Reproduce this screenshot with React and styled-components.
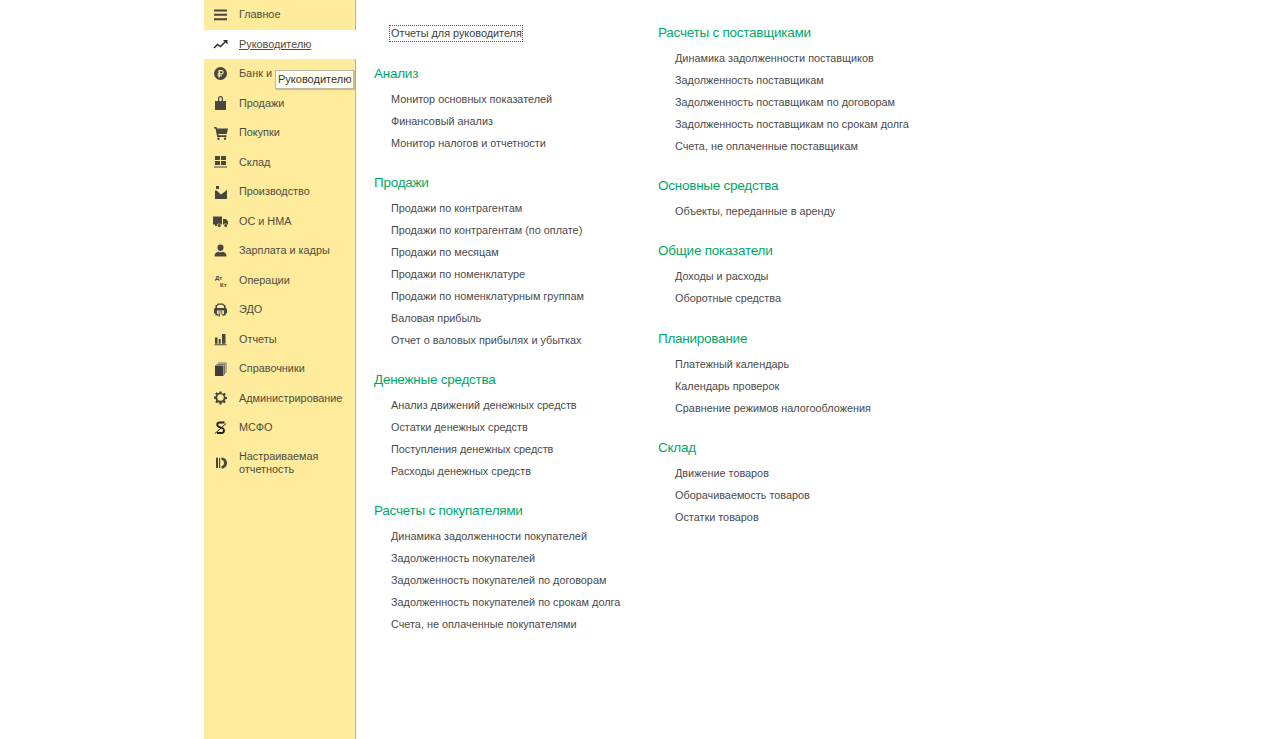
import React from 'react';
import styled, { createGlobalStyle } from 'styled-components';

const Global = createGlobalStyle`
  html, body { margin: 0; padding: 0; background: #fff; }
  body { font-family: "Liberation Sans", Arial, sans-serif; color: #4a4a4a; }
`;

const Page = styled.div`
  display: flex;
  width: 1280px;
  height: 739px;
  padding-left: 204px;
  box-sizing: border-box;
  overflow: hidden;
`;

const Sidebar = styled.nav`
  position: relative;
  width: 152px;
  flex-shrink: 0;
  box-sizing: border-box;
  background: #feeb9b;
  border-right: 1px solid #b5b09a;
`;

const NavRow = styled.div`
  display: flex;
  align-items: center;
  height: ${p => (p.$tall ? '41px' : '29.5px')};
  padding-left: 9px;
  background: ${p => (p.$active ? '#fff' : 'transparent')};
  margin-right: ${p => (p.$active ? '-1px' : '0')};
`;

const NavIcon = styled.svg`
  width: 16px;
  height: 16px;
  flex-shrink: 0;
  margin-right: 10px;
  fill: #47463f;
`;

const NavLabel = styled.span`
  font-size: 10.85px;
  line-height: 13.5px;
  color: #4e4c40;
  text-decoration: ${p => (p.$active ? 'underline' : 'none')};
`;

const Tooltip = styled.div`
  position: absolute;
  left: 71px;
  top: 70px;
  height: 19px;
  width: 79px;
  box-sizing: border-box;
  padding-left: 2px;
  font-size: 11px;
  line-height: 17px;
  color: #333;
  background: #fffff0;
  border: 1px solid #b9b6a8;
  box-shadow: 1px 1px 1px rgba(120, 115, 90, 0.35);
  white-space: nowrap;
`;

const Content = styled.main`
  display: flex;
  align-items: flex-start;
  padding: 25px 0 0 18px;
`;

const ColumnA = styled.div`
  width: 284px;
`;

const ColumnB = styled.div`
  margin-top: -4px;
`;

const TopLink = styled.div`
  width: 134px;
  height: 17px;
  margin-left: 15px;
  margin-bottom: 20px;
  box-sizing: border-box;
  border: 1px dotted #555;
  padding-left: 1px;
  font-size: 10.85px;
  line-height: 15px;
  color: #3e3e3e;
  white-space: nowrap;
`;

const Group = styled.section`
  margin-bottom: ${p => p.$gap}px;
`;

const Heading = styled.h3`
  margin: 0 0 3px;
  height: 23px;
  font-size: 13.5px;
  letter-spacing: -0.25px;
  line-height: 24px;
  font-weight: 400;
  color: #00a868;
`;

const LinkRow = styled.div`
  height: 22px;
  padding-left: 17px;
  font-size: 10.85px;
  line-height: 22px;
  color: #4a4a4a;
  white-space: nowrap;
`;

const IconWord = styled.text`
  font-family: "Liberation Sans", Arial, sans-serif;
  font-size: 6px;
  font-weight: 700;
`;

const icons = {
  menu: <path d="M1 2.500h13v2H1zM1 6.800h13v2H1zM1 11.200h13v2H1z" />,
  trend: <>
    <path fill="none" stroke="#2f2e2a" strokeWidth="1.500" d="M1 12l3.500-3.500 3 2L12.500 5.500" />
    <path fill="#2f2e2a" d="M10 4h4.500v4.500z" />
  </>,
  bank: <path fillRule="evenodd" d="M7.500 1a6.500 6.500 0 1 0 0 13 6.500 6.500 0 0 0 0-13zM5.500 4h3a2.200 2.200 0 0 1 0 4.400H7v.8h2v1H7V11.500H5.500v-1.300h-1v-1h1v-.8h-1V7.300h1zM7 5.200v2.100h1.500a1.050 1.050 0 0 0 0-2.100z" />,
  sales: <path fillRule="evenodd" d="M2 6h3V3.500a2.500 2.500 0 0 1 5 0V6h3v9H2zM6.200 6h2.600V3.500a1.300 1.300 0 0 0-2.600 0z" />,
  cart: <path d="M1 2h2.500l.5 1.500H15l-1.300 5.500H5.300l.3 1.300H13.500V12H4.200L2.500 3.500H1zM5.500 12.600a1.200 1.200 0 1 1 0 2.400 1.200 1.200 0 0 1 0-2.400zM12 12.600a1.200 1.200 0 1 1 0 2.400 1.200 1.200 0 0 1 0-2.400z" />,
  stock: <path d="M2 2h5v4H2zM8 2h5v4H8zM2 7h5v4H2zM8 7h5v4H8zM1 12.400h13v1.200H1z" />,
  factory: <path d="M3 2h3v3H3zM2 15V6.500h1.500L8 10.500l6-4.500v9z" />,
  truck: <path d="M0 3.500h9v8H7.800a1.800 1.800 0 0 0-3.300 0H0zM10 6h3l2 2.500v3h-.7a1.800 1.800 0 0 0-3.300 0h-1zM6.200 11a1.500 1.500 0 1 1 0 3 1.500 1.500 0 0 1 0-3zM12.700 11a1.500 1.500 0 1 1 0 3 1.500 1.500 0 0 1 0-3zM2 11.500h2v1.500H2z" />,
  person: <path d="M7.500 1.500a3 3 0 0 1 3 3.200c0 1.800-1 3.300-3 3.300s-3-1.500-3-3.300a3 3 0 0 1 3-3.200zM5.300 8.700c.8.800 3.600.8 4.400 0C12 9.300 13.500 10.500 13.500 13.500h-12c0-3 1.500-4.200 3.800-4.800z" />,
  ops: <>
    <IconWord x="2" y="7.500">Дт</IconWord>
    <IconWord x="7" y="14.500">Кт</IconWord>
  </>,
  edo: <path fillRule="evenodd" d="M5 1.500h5l1.500 1.500h1v2.500L14 7v4l-1.500 1v1.500H9V12h2V8.500H4V12h2v1.500H2.500V12L1 11V7l1.500-1.500V3h1zM5.500 2.800L4 4.200v1.800h7V4.200L9.500 2.800zM5.500 9.500h4v1h-4zM5.500 11.500h1.500v3H5.500zM8 11.500h1.500v1H8z" />,
  reports: <path d="M2 6.500h2.500v6.300H2zM5.700 8h2v4.800h-2zM9 3h3.500v9.800H9zM1.500 13.300H13.500v1H1.500z" />,
  books: <>
    <path fill="#3d3d3d" d="M2 4.500h8.500V15H2z" />
    <path fill="#77756a" d="M3.500 3h8.500v10.500h-1V4H3.500zM5 1.500h8.500V12h-1V2.500H5z" />
  </>,
  gear: <path fillRule="evenodd" d="M6.500 1.500h2l.3 1.700 1.200.5 1.400-1 1.400 1.400-1 1.400.5 1.200 1.700.3v2l-1.700.3-.5 1.200 1 1.400-1.400 1.400-1.400-1-1.200.5-.3 1.700h-2l-.3-1.700-1.200-.5-1.400 1-1.400-1.400 1-1.400-.5-1.200L1 8.500v-2l1.700-.3.5-1.200-1-1.400L3.600 2.200l1.400 1 1.200-.5zM7.500 4.300a3.200 3.200 0 1 0 0 6.400 3.200 3.200 0 0 0 0-6.400z" />,
  msfo: <>
    <path fill="none" stroke="#1f1e1a" strokeWidth="1.800" d="M11.500 2.500H6.500C3.500 2.500 3.500 6.500 6.500 7l2.500 1c3 1 2.500 5-.5 5H4" />
    <path fill="none" stroke="#1f1e1a" strokeWidth="1" d="M2 13.500L13 3.500" />
  </>,
  custom: <>
    <path d="M3 3.500l1 -1.500 1 1.500v9.500H3zM6 3h1.200v10H6z" />
    <path d="M8.500 2.500c3.500 0 5.500 2.500 5.500 5.500s-2 5.500-5.500 5.500v-2.500c1.500 0 2.500-1.300 2.500-3s-1-3-2.500-3z" />
  </>,
};

const navItems = [
  ['menu', 'Главное'],
  ['trend', 'Руководителю', true],
  ['bank', 'Банк и'],
  ['sales', 'Продажи'],
  ['cart', 'Покупки'],
  ['stock', 'Склад'],
  ['factory', 'Производство'],
  ['truck', 'ОС и НМА'],
  ['person', 'Зарплата и кадры'],
  ['ops', 'Операции'],
  ['edo', 'ЭДО'],
  ['reports', 'Отчеты'],
  ['books', 'Справочники'],
  ['gear', 'Администрирование'],
  ['msfo', 'МСФО'],
];

const leftGroups = [
  ['Анализ', ['Монитор основных показателей', 'Финансовый анализ', 'Монитор налогов и отчетности']],
  ['Продажи', ['Продажи по контрагентам', 'Продажи по контрагентам (по оплате)', 'Продажи по месяцам', 'Продажи по номенклатуре', 'Продажи по номенклатурным группам', 'Валовая прибыль', 'Отчет о валовых прибылях и убытках']],
  ['Денежные средства', ['Анализ движений денежных средств', 'Остатки денежных средств', 'Поступления денежных средств', 'Расходы денежных средств']],
  ['Расчеты с покупателями', ['Динамика задолженности покупателей', 'Задолженность покупателей', 'Задолженность покупателей по договорам', 'Задолженность покупателей по срокам долга', 'Счета, не оплаченные покупателями']],
];

const rightGroups = [
  ['Расчеты с поставщиками', ['Динамика задолженности поставщиков', 'Задолженность поставщикам', 'Задолженность поставщикам по договорам', 'Задолженность поставщикам по срокам долга', 'Счета, не оплаченные поставщикам']],
  ['Основные средства', ['Объекты, переданные в аренду']],
  ['Общие показатели', ['Доходы и расходы', 'Оборотные средства']],
  ['Планирование', ['Платежный календарь', 'Календарь проверок', 'Сравнение режимов налогообложения']],
  ['Склад', ['Движение товаров', 'Оборачиваемость товаров', 'Остатки товаров']],
];

const Groups = ({ items, gap }) => items.map(([title, links]) => (
  <Group key={title} $gap={gap}>
    <Heading>{title}</Heading>
    {links.map(l => <LinkRow key={l}>{l}</LinkRow>)}
  </Group>
));

export default function App() {
  return (
    <Page>
      <Global />
      <Sidebar>
        {navItems.map(([icon, label, active]) => (
          <NavRow key={label} $active={active}>
            <NavIcon viewBox="0 0 16 16">{icons[icon]}</NavIcon>
            <NavLabel $active={active}>{label}</NavLabel>
          </NavRow>
        ))}
        <NavRow $tall>
          <NavIcon viewBox="0 0 16 16">{icons.custom}</NavIcon>
          <NavLabel>Настраиваемая<br />отчетность</NavLabel>
        </NavRow>
        <Tooltip>Руководителю</Tooltip>
      </Sidebar>
      <Content>
        <ColumnA>
          <TopLink>Отчеты для руководителя</TopLink>
          <Groups items={leftGroups} gap={17} />
        </ColumnA>
        <ColumnB>
          <Groups items={rightGroups} gap={17.2} />
        </ColumnB>
      </Content>
    </Page>
  );
}
